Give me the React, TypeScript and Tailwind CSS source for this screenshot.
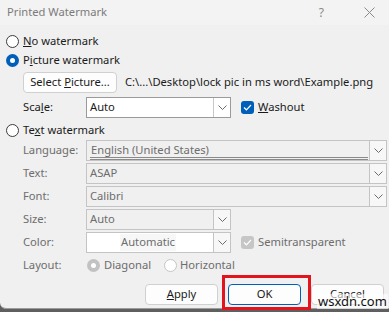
import React from 'react';

const FONT = { fontFamily: '"Noto Sans", "Open Sans", sans-serif' };

function Chevron({ color = '#6b6b6b' }: { color?: string }) {
  return (
    <svg width="9" height="5" viewBox="0 0 9 5">
      <path d="M0.5 0.5 L4.5 4.5 L8.5 0.5" fill="none" stroke={color} strokeWidth="1" />
    </svg>
  );
}

function Radio({ checked, disabled }: { checked?: boolean; disabled?: boolean }) {
  if (checked) {
    return (
      <span
        className={`flex h-[13px] w-[13px] shrink-0 items-center justify-center rounded-full ${
          disabled ? 'bg-[#c2c2c2]' : 'bg-[#005fb8]'
        }`}
      >
        <span className="h-[5px] w-[5px] rounded-full bg-white" />
      </span>
    );
  }
  return (
    <span
      className={`block h-[13px] w-[13px] shrink-0 rounded-full border bg-white ${
        disabled ? 'border-[#c6c6c6]' : 'border-[#3c3c3c]'
      }`}
    />
  );
}

function Check({ disabled }: { disabled?: boolean }) {
  return (
    <span
      className={`flex h-[13px] w-[13px] shrink-0 items-center justify-center rounded-[3px] ${
        disabled ? 'bg-[#c6c6c6]' : 'bg-[#005fb8]'
      }`}
    >
      <svg width="9" height="7" viewBox="0 0 9 7">
        <path d="M1 3.5 L3.4 5.8 L8 1" fill="none" stroke="white" strokeWidth="1.2" />
      </svg>
    </span>
  );
}

interface ComboProps {
  value: string;
  wide?: boolean;
  disabled?: boolean;
  underline?: boolean;
  center?: boolean;
}

function Combo({ value, wide, disabled, underline, center }: ComboProps) {
  return (
    <div
      className={`flex h-[21px] border ${wide ? 'w-[301px]' : 'w-[145px]'} ${
        disabled ? 'border-[#c4c4c4] bg-[#f0f0f0] text-[#6d6d6d]' : 'border-[#9a9a9a] bg-white text-[#1a1a1a]'
      } ${center ? 'bg-white' : ''}`}
    >
      <div className={`flex min-w-0 flex-1 items-center ${center ? 'justify-center pr-[4px]' : 'pl-[3px]'}`}>
        {underline ? (
          <div className="mr-[1px] mt-[1px] h-[17px] flex-1 border-b-[3px] border-double border-[#8a8a8a] pl-[1px] leading-[14px]">
            {value}
          </div>
        ) : (
          <span className={center ? 'bg-[#f7f7f7] px-[1px]' : ''}>{value}</span>
        )}
      </div>
      <div
        className={`flex w-[17px] items-center justify-center border-l ${
          disabled ? 'border-[#c4c4c4] bg-[#f7f7f7]' : 'border-[#c8c8c8] bg-white'
        }`}
      >
        <Chevron />
      </div>
    </div>
  );
}

function Field({ label, children, disabled }: { label: React.ReactNode; children: React.ReactNode; disabled?: boolean }) {
  return (
    <div className="flex h-[21px] items-center pl-[17px]">
      <span className={`w-[63px] ${disabled ? 'text-[#6d6d6d]' : 'text-[#1a1a1a]'}`}>{label}</span>
      {children}
    </div>
  );
}

function Button({ children, primary }: { children: React.ReactNode; primary?: boolean }) {
  return (
    <div
      className={`flex h-[21px] w-[73px] items-center justify-center rounded-[4px] border bg-[#fdfdfd] ${
        primary ? 'border-[#005fb8]' : 'border-[#d0d0d0]'
      }`}
    >
      <span>{children}</span>
    </div>
  );
}

export default function App() {
  return (
    <div className="relative h-[312px] w-[389px] overflow-hidden bg-[#5f5f5f] text-[11.2px] text-[#1a1a1a]" style={FONT}>
      <div className="flex h-[309px] flex-col rounded-bl-[6px] border-b border-[#9c9c9c] bg-[#f0f0f0]">
        <div className="flex h-[25px] shrink-0 items-center bg-[#f3f3f3] pl-[7px] text-[#7b7b7b]">
          <span className="flex-1">Printed Watermark</span>
          <span className="mr-[40px] text-[12px] text-[#8a8a8a]">?</span>
          <svg width="11" height="11" viewBox="0 0 11 11" className="mr-[14px]">
            <path d="M0.5 0.5 L10.5 10.5 M10.5 0.5 L0.5 10.5" stroke="#8a8a8a" strokeWidth="1" />
          </svg>
        </div>

        <div className="flex flex-col pl-[6px]">
          <div className="mt-[7px] flex h-[18px] items-center gap-[4px]">
            <Radio />
            <span>
              <u>N</u>o watermark
            </span>
          </div>
          <div className="mt-[1px] flex h-[18px] items-center gap-[4px]">
            <Radio checked />
            <span>
              P<u>i</u>cture watermark
            </span>
          </div>
          <div className="mt-[3px] flex h-[21px] items-center pl-[17px]">
            <div className="flex h-[21px] w-[94px] items-center justify-center rounded-[4px] border border-[#d0d0d0] bg-[#fdfdfd]">
              <span>
                Select <u>P</u>icture...
              </span>
            </div>
            <span className="ml-[8px] whitespace-nowrap">C:\...\Desktop\lock pic in ms word\Example.png</span>
          </div>
          <div className="mt-[4px]">
            <Field
              label={
                <>
                  Sca<u>l</u>e:
                </>
              }
            >
              <Combo value="Auto" />
              <div className="ml-[10px] flex items-center gap-[4px]">
                <Check />
                <span>
                  <u>W</u>ashout
                </span>
              </div>
            </Field>
          </div>
          <div className="mt-[2px] flex h-[20px] items-center gap-[4px]">
            <Radio />
            <span>
              Te<u>x</u>t watermark
            </span>
          </div>
          <div>
            <Field label="Language:" disabled>
              <Combo value="English (United States)" wide disabled underline />
            </Field>
          </div>
          <div className="mt-[2px]">
            <Field label="Text:" disabled>
              <Combo value="ASAP" wide disabled />
            </Field>
          </div>
          <div className="mt-[2px]">
            <Field label="Font:" disabled>
              <Combo value="Calibri" wide disabled />
            </Field>
          </div>
          <div className="mt-[2px]">
            <Field label="Size:" disabled>
              <Combo value="Auto" disabled />
            </Field>
          </div>
          <div className="mt-[2px]">
            <Field label="Color:" disabled>
              <Combo value="Automatic" disabled center />
              <div className="ml-[10px] flex items-center gap-[4px] text-[#6d6d6d]">
                <Check disabled />
                <span>Semitransparent</span>
              </div>
            </Field>
          </div>
          <div className="mt-[2px] flex h-[20px] items-center pl-[17px] text-[#6d6d6d]">
            <span className="w-[64px]">Layout:</span>
            <Radio checked disabled />
            <span className="ml-[4px]">Diagonal</span>
            <span className="ml-[13px]">
              <Radio disabled />
            </span>
            <span className="ml-[3px]">Horizontal</span>
          </div>
          <div className="mt-[9px] flex justify-end gap-[10px] pr-[5px]">
            <Button>
              <u>A</u>pply
            </Button>
            <Button primary>OK</Button>
            <Button>Cancel</Button>
          </div>
        </div>
      </div>

      {/* red highlight around the OK button */}
      <div className="absolute left-[222px] top-[275px] h-[35px] w-[89px] border-[3px] border-[#e3141e]" />
      {/* site watermark */}
      <div className="absolute left-[317px] top-[294px] bg-white/60 px-[1px] text-[13px] leading-[15px] text-[#111]">
        wsxdn.com
      </div>
    </div>
  );
}
